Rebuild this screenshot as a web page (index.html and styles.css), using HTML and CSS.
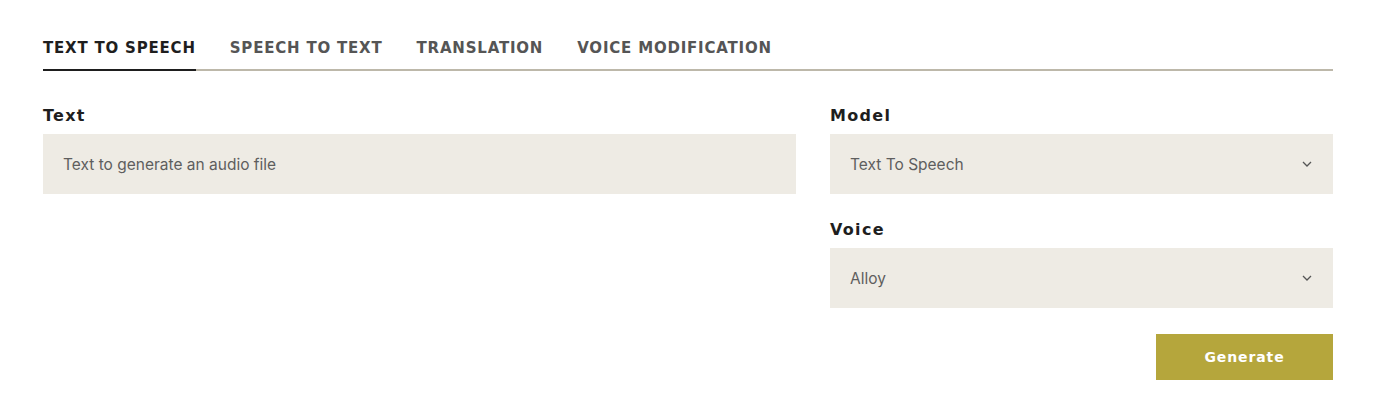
FILE: index.html
```html
<!DOCTYPE html>
<html lang="en">
<head>
<meta charset="utf-8">
<title>Text to Speech</title>
<link rel="stylesheet" href="styles.css">
</head>
<body>
<div class="page">
  <nav class="tabs">
    <span class="tab active">TEXT TO SPEECH</span>
    <span class="tab">SPEECH TO TEXT</span>
    <span class="tab">TRANSLATION</span>
    <span class="tab">VOICE MODIFICATION</span>
  </nav>
  <div class="form">
    <div class="col">
      <label class="label">Text</label>
      <div class="field"><span class="placeholder">Text to generate an audio file</span></div>
    </div>
    <div class="col">
      <label class="label">Model</label>
      <div class="field select"><span class="value">Text To Speech</span>
        <svg class="chev" width="10" height="6" viewBox="0 0 10 6"><path d="M1 1l4 4 4-4" fill="none" stroke="#555" stroke-width="1.3"/></svg>
      </div>
      <label class="label second">Voice</label>
      <div class="field select"><span class="value">Alloy</span>
        <svg class="chev" width="10" height="6" viewBox="0 0 10 6"><path d="M1 1l4 4 4-4" fill="none" stroke="#555" stroke-width="1.3"/></svg>
      </div>
      <div class="actions"><button class="btn">Generate</button></div>
    </div>
  </div>
</div>
</body>
</html>
```
FILE: styles.css
```css
* { box-sizing: border-box; }
body { margin: 0; background: #fff; }
.page { padding: 38px 45px 0 43px; }
.tabs {
  display: flex;
  gap: 34px;
  border-bottom: 2px solid #bdb8aa;
}
.tab {
  font-family: "DejaVu Sans", sans-serif;
  font-weight: bold;
  font-size: 15px;
  line-height: 20px;
  letter-spacing: 0.8px;
  color: #555;
  padding-bottom: 11px;
  margin-bottom: -2px;
  border-bottom: 2px solid transparent;
  white-space: nowrap;
}
.tab.active { color: #1e1e1e; border-bottom-color: #1e1e1e; }
.form {
  display: grid;
  grid-template-columns: 753px 1fr;
  column-gap: 34px;
  margin-top: 35px;
}
.col { display: flex; flex-direction: column; }
.label {
  font-family: "DejaVu Sans", sans-serif;
  font-weight: bold;
  font-size: 16px;
  line-height: 20px;
  letter-spacing: 1.3px;
  color: #1e1e1e;
  margin-bottom: 8px;
}
.label.second { margin-top: 26px; }
.field {
  height: 60px;
  background: #eeebe4;
  display: flex;
  align-items: center;
  padding: 0 20px;
  font-family: "Inter", sans-serif;
  font-size: 15.5px;
  color: #5e5e5e;
}
.select { justify-content: space-between; }
.chev { margin-right: 1px; }
.actions { display: flex; justify-content: flex-end; margin-top: 26px; }
.btn {
  width: 177px;
  height: 46px;
  border: 0;
  background: #b5a63c;
  color: #fff;
  font-family: "DejaVu Sans", sans-serif;
  font-weight: bold;
  font-size: 14px;
  letter-spacing: 0.9px;
}
```
